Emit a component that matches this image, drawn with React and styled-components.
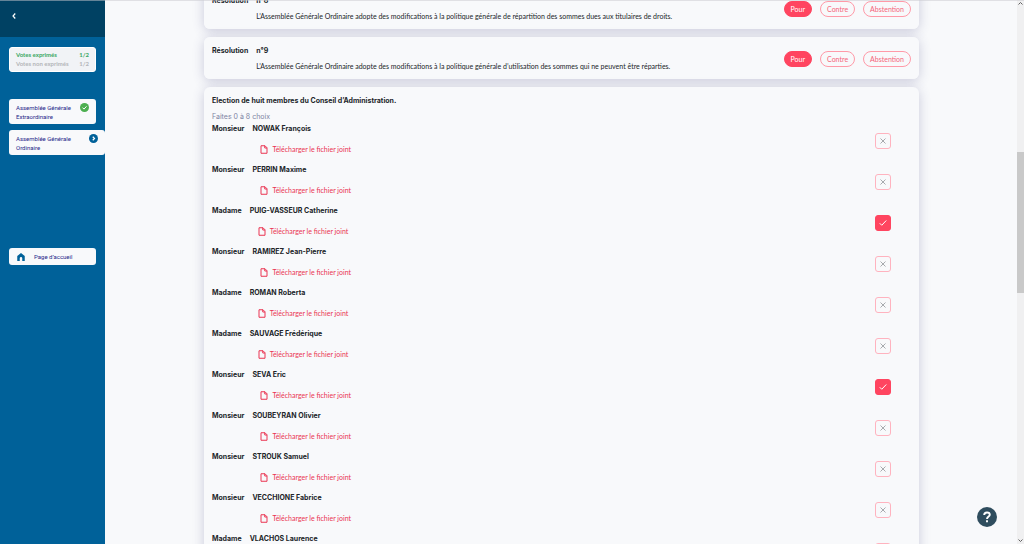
import React, { useState } from "react";
import styled, { createGlobalStyle } from "styled-components";

const resolutions = [
    {
        id: "r8",
        number: "n°8",
        text: "L’Assemblée Générale Ordinaire adopte des modifications à la politique générale de répartition des sommes dues aux titulaires de droits.",
    },
    {
        id: "r9",
        number: "n°9",
        text: "L’Assemblée Générale Ordinaire adopte des modifications à la politique générale d’utilisation des sommes qui ne peuvent être réparties.",
    },
];

const choices = ["Pour", "Contre", "Abstention"];

const candidates = [
    { title: "Monsieur", name: "NOWAK François" },
    { title: "Monsieur", name: "PERRIN Maxime" },
    { title: "Madame", name: "PUIG-VASSEUR Catherine" },
    { title: "Monsieur", name: "RAMIREZ Jean-Pierre" },
    { title: "Madame", name: "ROMAN Roberta" },
    { title: "Madame", name: "SAUVAGE Frédérique" },
    { title: "Monsieur", name: "SEVA Eric" },
    { title: "Monsieur", name: "SOUBEYRAN Olivier" },
    { title: "Monsieur", name: "STROUK Samuel" },
    { title: "Monsieur", name: "VECCHIONE Fabrice" },
    { title: "Madame", name: "VLACHOS Laurence" },
];

const Resolution = ({ item }) => {
    const [vote, setVote] = useState("Pour");

    return (
        <Card as="fieldset">
            <ResolutionRow>
                <Label>Résolution</Label>
                <ResolutionBody>
                    <Strong>{item.number}</Strong>
                    <Text>{item.text}</Text>
                </ResolutionBody>
                <Pills>
                    {choices.map((choice) => (
                        <Pill key={choice}>
                            <input
                                type="radio"
                                name={item.id}
                                checked={vote === choice}
                                onChange={() => setVote(choice)}
                            />
                            {choice}
                        </Pill>
                    ))}
                </Pills>
            </ResolutionRow>
        </Card>
    );
};

const Candidate = ({ person, checked, onToggle }) => (
    <CandidateRow>
        <Label>{person.title}</Label>
        <CandidateBody>
            <Strong>{person.name}</Strong>
            <FileLink href="#">
                <svg width="8" height="9" viewBox="0 0 16 18" fill="none" stroke="currentColor" strokeWidth="2" strokeLinejoin="round">
                    <path d="M2 1.500h8L14 5.500v11H2z" />
                    <path d="M9.500 1.500V6H14" />
                </svg>
                Télécharger le fichier joint
            </FileLink>
        </CandidateBody>
        <Tick>
            <input type="checkbox" aria-label={person.name} checked={checked} onChange={onToggle} />
            {checked ? (
                <svg width="8" height="8" viewBox="0 0 16 16">
                    <path d="M1.500 8.500l4 4 9-9.500" />
                </svg>
            ) : (
                <svg width="6" height="6" viewBox="0 0 12 12">
                    <path d="M1 1l10 10M11 1L1 11" />
                </svg>
            )}
        </Tick>
    </CandidateRow>
);

const App = () => {
    const [selected, setSelected] = useState([2, 6]);

    const toggle = (index) => {
        setSelected(selected.includes(index) ? selected.filter((i) => i !== index) : [...selected, index]);
    };

    return (
        <Page>
            <GlobalStyle />
            <Sidebar>
                <SidebarTop>
                    <BackButton aria-label="Retour">
                        <svg width="4" height="6" viewBox="0 0 8 12" fill="none" stroke="currentColor" strokeWidth="2.400">
                            <path d="M6.500 1L2 6l4.500 5" />
                        </svg>
                    </BackButton>
                </SidebarTop>
                <Nav>
                    <Counter>
                        <CounterLine $done>
                            <span>Votes exprimés</span>
                            <span>1/2</span>
                        </CounterLine>
                        <CounterLine>
                            <span>Votes non exprimés</span>
                            <span>1/2</span>
                        </CounterLine>
                    </Counter>
                    <Meetings>
                        <NavLink href="#">
                            <span>Assemblée Générale Extraordinaire</span>
                            <svg width="9" height="9" viewBox="0 0 18 18" fill="none">
                                <circle cx="9" cy="9" r="9" fill="#4caf50" />
                                <path d="M5 9.200l3 3 5-5.500" stroke="#fff" strokeWidth="2" />
                            </svg>
                        </NavLink>
                        <NavLink href="#" $active>
                            <span>Assemblée Générale Ordinaire</span>
                            <svg width="9" height="9" viewBox="0 0 18 18" fill="none">
                                <circle cx="9" cy="9" r="9" fill="#006199" />
                                <path d="M7.500 5.500L11 9l-3.500 3.500" stroke="#fff" strokeWidth="2.400" />
                            </svg>
                        </NavLink>
                    </Meetings>
                    <HomeLink href="#">
                        <svg width="8" height="8" viewBox="0 0 16 16" fill="#006199">
                            <path d="M8 0l7.500 6v10h-5v-5.500a2.500 2.500 0 0 0-5 0V16h-5V6z" />
                        </svg>
                        Page d’accueil
                    </HomeLink>
                </Nav>
            </Sidebar>
            <Main>
                <Cards>
                    {resolutions.map((item) => (
                        <Resolution key={item.id} item={item} />
                    ))}
                    <Card>
                        <Heading>Election de huit membres du Conseil d’Administration.</Heading>
                        <Hint>Faites 0 à 8 choix</Hint>
                        <CandidateList>
                            {candidates.map((person, index) => (
                                <Candidate
                                    key={person.name}
                                    person={person}
                                    checked={selected.includes(index)}
                                    onToggle={() => toggle(index)}
                                />
                            ))}
                        </CandidateList>
                    </Card>
                </Cards>
            </Main>
            <ScrollTrack>
                <Arrow viewBox="0 0 10 6">
                    <path d="M1 5l4-4 4 4" />
                </Arrow>
                <ScrollThumb />
                <Arrow viewBox="0 0 10 6">
                    <path d="M1 1l4 4 4-4" />
                </Arrow>
            </ScrollTrack>
            <HelpButton aria-label="Aide">
                <svg width="8" height="12" viewBox="0 0 10 14" fill="none" stroke="#fff" strokeWidth="2.400">
                    <path d="M1.500 4.500C1.500 2.500 3 1.300 5 1.300s3.500 1.200 3.500 3C8.500 6.500 5 6.600 5 9.600" />
                    <path d="M5 11.200v2.400" />
                </svg>
            </HelpButton>
        </Page>
    );
};

export default App;

const GlobalStyle = createGlobalStyle`
*{
    box-sizing: border-box;
}
body{
    margin: 0;
    overflow: hidden;
    background: #f8f9fb;
    color: #212529;
    font-family: Inter, sans-serif;
    font-size: 7px;
    line-height: 10px;
}
a{
    text-decoration: none;
}
button, input{
    font: inherit;
}
`;

const Page = styled.div`
display: flex;
height: 100vh;
overflow: hidden;

&::before{
    content: "";
    position: absolute;
    top: 0;
    left: 0;
    right: 0;
    height: 1px;
    background: rgba(200, 200, 205, 0.5);
    z-index: 2;
}
`;

const Sidebar = styled.aside`
flex: 0 0 105px;
background: #006199;
font-family: Roboto, sans-serif;
font-size: 6px;
line-height: 9px;
`;

const SidebarTop = styled.div`
display: flex;
align-items: flex-start;
height: 37px;
padding: 12px 10px;
background: #004163;
`;

const BackButton = styled.button`
display: flex;
padding: 1px 2px;
border: 0;
background: none;
color: #fff;
cursor: pointer;
`;

const Nav = styled.nav`
display: flex;
flex-direction: column;
padding: 10px 0 0 9px;
`;

const Counter = styled.div`
margin-right: 9px;
padding: 2px 6px 3px;
border-radius: 3px;
border: 1px solid #fff;
background: #f1f3f6;
font-family: Lato, sans-serif;
font-weight: 700;
`;

const CounterLine = styled.div`
display: flex;
justify-content: space-between;
color: ${({ $done }) => ($done ? "#3aa864" : "#b4b6b9")};
`;

const Meetings = styled.div`
display: flex;
flex-direction: column;
gap: 6px;
margin: 27px 0 93px;
`;

const NavLink = styled.a`
display: flex;
justify-content: space-between;
align-items: flex-start;
margin-right: ${({ $active }) => ($active ? 0 : "9px")};
padding: 4px 7px 3px;
border-radius: 3px;
background: #f8f9fb;
color: #26268a;

span{
    width: 60px;
}
`;

const HomeLink = styled.a`
display: flex;
align-items: center;
gap: 9px;
height: 17px;
margin-right: 9px;
padding: 0 8px;
border-radius: 3px;
background: #f8f9fb;
color: #26268a;
`;

const Main = styled.main`
flex: 1;
min-width: 0;
overflow: hidden;
padding: 0 98px 0 99px;
`;

/* the list is scrolled a little past the top of its first card */
const Cards = styled.div`
display: flex;
flex-direction: column;
gap: 8px;
margin-top: -13px;
`;

const Card = styled.section`
min-width: 0;
margin: 0;
padding: 9px 8px 8px;
border: 0;
border-radius: 6px;
background: #f8f9fb;
box-shadow: 0 2px 12px rgba(60, 60, 120, 0.24);
`;

const ResolutionRow = styled.div`
display: flex;
align-items: center;
gap: 8px;
`;

const ResolutionBody = styled.div`
display: flex;
flex-direction: column;
gap: 5px;
flex: 1;
`;

const Label = styled.span`
align-self: flex-start;
font-weight: 700;
`;

const Strong = styled.strong`
font-weight: 700;
`;

const Text = styled.p`
margin: 0;
font-family: Lato, sans-serif;
`;

const Pills = styled.div`
display: flex;
gap: 8px;
`;

const Pill = styled.label`
padding: 2px 6px;
border: 1px solid #ff9aa8;
border-radius: 8px;
font-family: Lato, sans-serif;
color: #f5637a;
cursor: pointer;

input{
    position: absolute;
    opacity: 0;
}
&:has(input:checked){
    border-color: #ff4560;
    background: #ff4560;
    color: #fff;
}
`;

const Heading = styled.h2`
margin: 0 0 6px;
font-size: 7px;
font-weight: 700;
`;

const Hint = styled.p`
margin: 0 0 2px;
color: #7d84a3;
`;

const CandidateList = styled.ul`
display: flex;
flex-direction: column;
gap: 8px;
margin: 0;
padding: 0 20px 0 0;
list-style: none;
`;

const CandidateRow = styled.li`
display: flex;
align-items: center;
gap: 8px;
height: 33px;
`;

const CandidateBody = styled.div`
display: flex;
flex-direction: column;
align-items: flex-start;
align-self: flex-start;
gap: 10px;
flex: 1;
`;

const FileLink = styled.a`
display: flex;
align-items: center;
gap: 4px;
padding-left: 8px;
font-family: Lato, sans-serif;
color: #ea3452;
`;

const Tick = styled.label`
display: flex;
align-items: center;
justify-content: center;
width: 16px;
height: 16px;
border: 1px solid #ffb3bf;
border-radius: 3px;
cursor: pointer;

input{
    position: absolute;
    opacity: 0;
}
svg{
    fill: none;
    stroke: #8c8f94;
    stroke-width: 1.5;
}
&:has(input:checked){
    border-color: #ff4560;
    background: #ff4560;
}
&:has(input:checked) svg{
    stroke: #fff;
    stroke-width: 2;
}
`;

const ScrollTrack = styled.div`
display: flex;
flex-direction: column;
align-items: center;
flex: 0 0 7px;
padding: 2px 0;
background: #f0f0f1;
`;

const ScrollThumb = styled.div`
width: 100%;
height: 26vh;
margin: 147px 0 auto;
background: #c9c9c9;
`;

const Arrow = styled.svg`
width: 5px;
height: 3px;
fill: none;
stroke: #606060;
stroke-width: 2;
`;

const HelpButton = styled.button`
position: fixed;
right: 27px;
bottom: 17px;
display: flex;
align-items: center;
justify-content: center;
width: 20px;
height: 20px;
padding: 0;
border: 0;
border-radius: 50%;
background: #2f4d5e;
cursor: pointer;
`;
